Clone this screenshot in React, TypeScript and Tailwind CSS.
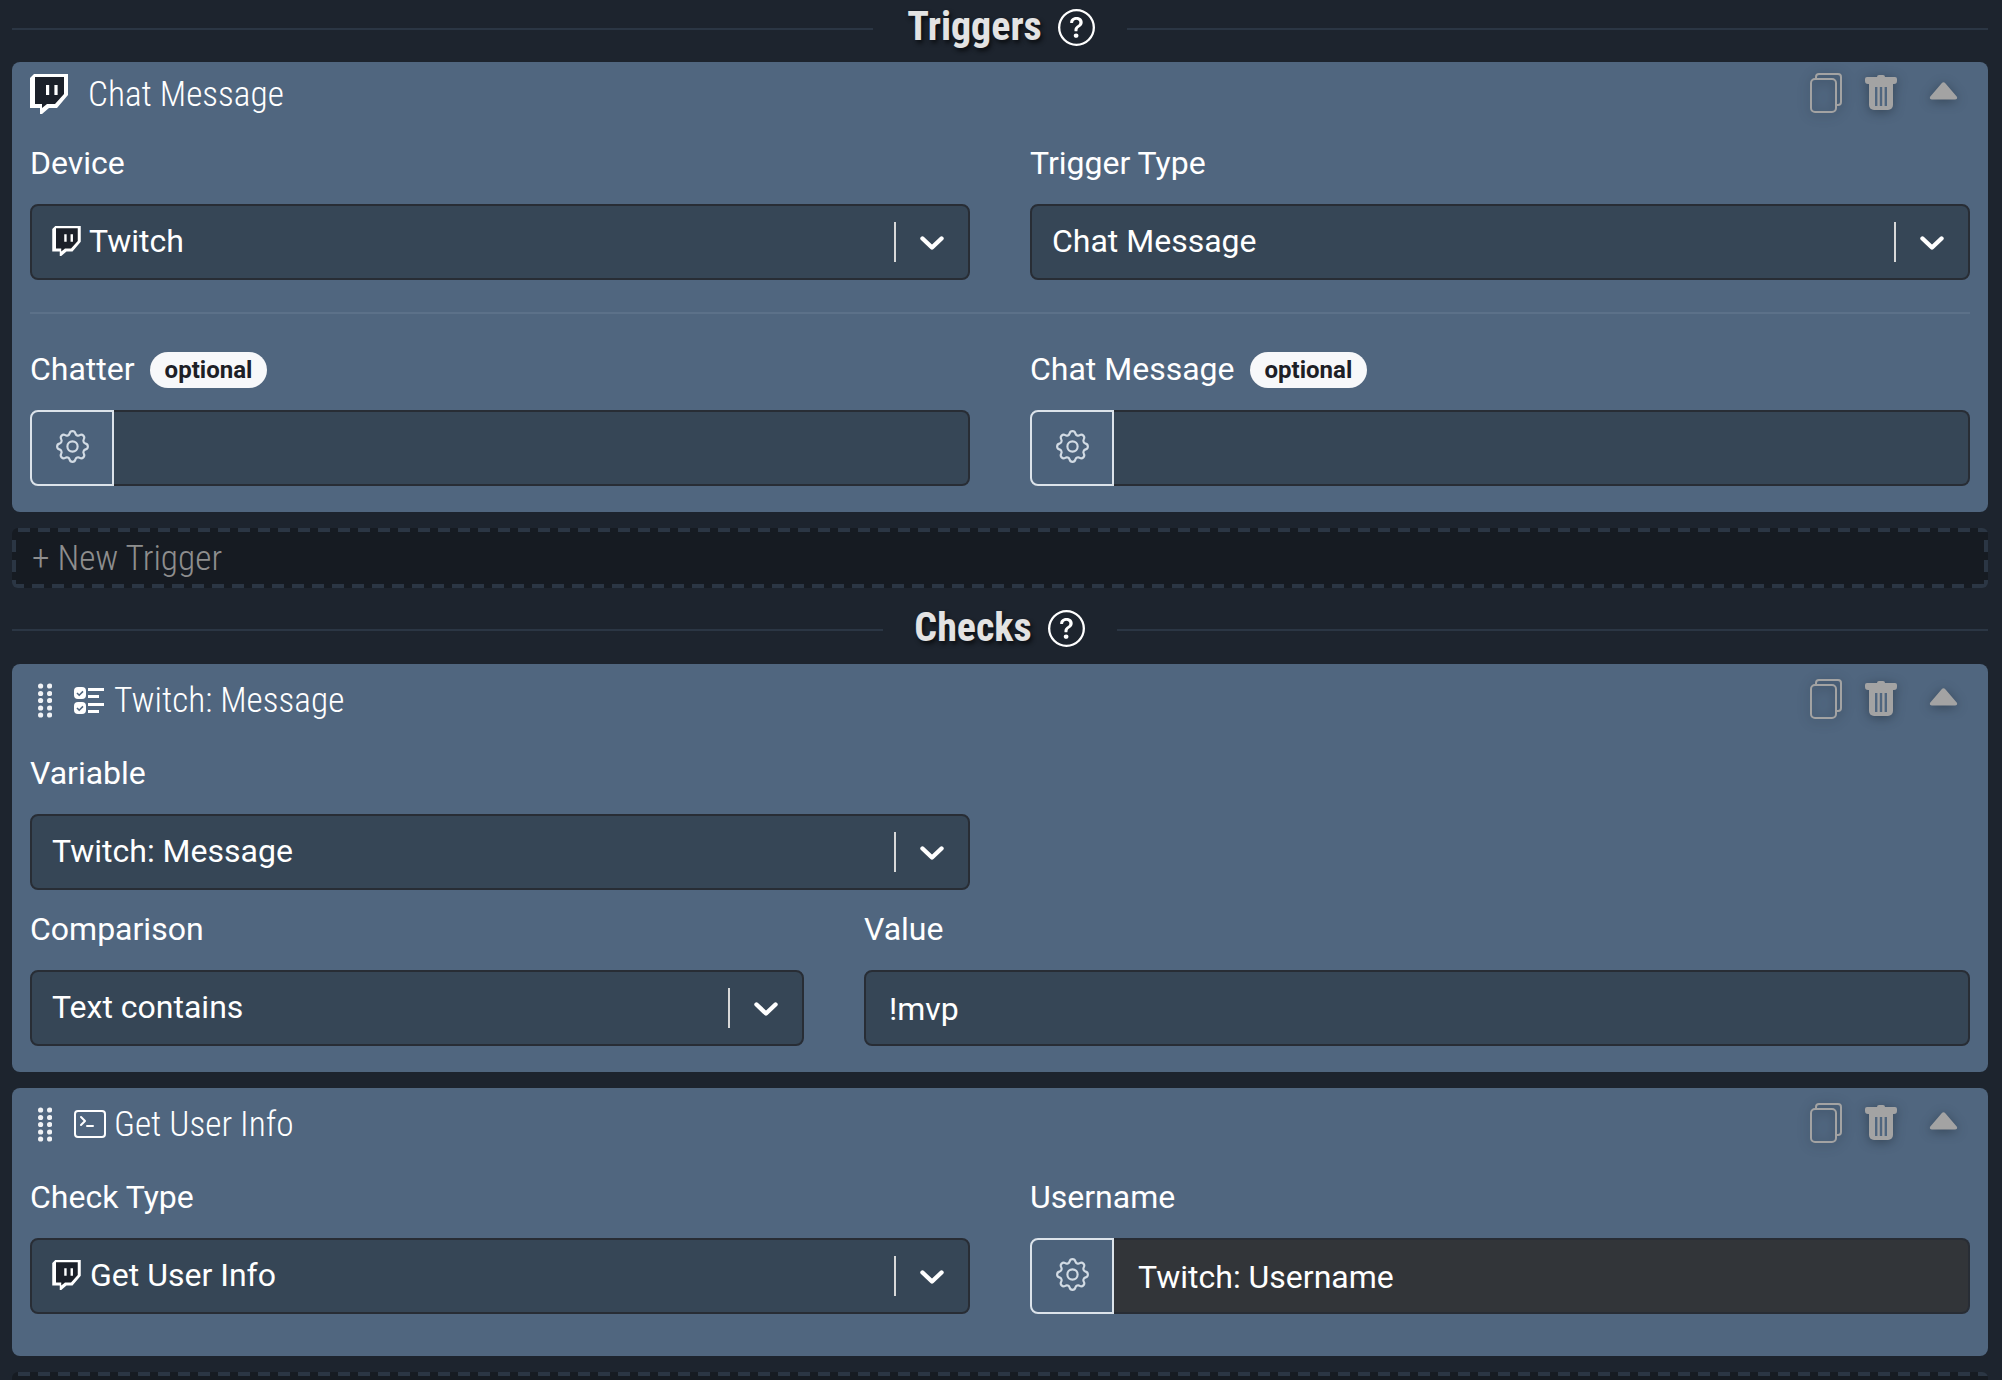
import { ReactNode } from "react";
import { BsQuestionCircle, BsTerminal } from "react-icons/bs";
import { TbSettings } from "react-icons/tb";

function TwitchIcon({ className }: { className: string }) {
  return (
    <svg viewBox="0 0 38 40" className={className}>
      <path d="M4 0H38V21L27 34H19L12 40H10V34H0V4Z" fill="#fff" />
      <path d="M5 3H34V20L25 30H17L12 34V30H5Z" fill="#1b2029" />
      <rect x="16" y="11" width="3.2" height="10" fill="#fff" />
      <rect x="24.4" y="11" width="3.2" height="10" fill="#fff" />
    </svg>
  );
}

function CopyIcon() {
  return (
    <svg viewBox="0 0 32 40" className="h-[40px] w-[32px]" fill="none" stroke="#a3a3a3" strokeWidth="2">
      <rect x="1" y="6" width="25" height="33" rx="4" />
      <path d="M6 5V4a3 3 0 0 1 3-3h19a3 3 0 0 1 3 3v25a3 3 0 0 1-3 3h-2" />
    </svg>
  );
}

function TrashIcon() {
  return (
    <svg viewBox="0 0 32 37" className="h-[37px] w-[32px]">
      <path d="M12 3a2 2 0 0 1 2-2h4a2 2 0 0 1 2 2h10a2 2 0 0 1 2 2v2a3 3 0 0 1-3 3H3a3 3 0 0 1-3-3V5a2 2 0 0 1 2-2Z" fill="#a3a3a3" />
      <path d="M4 10H28V31a5 5 0 0 1-5 5H9a5 5 0 0 1-5-5Z" fill="#a3a3a3" />
      <rect x="10" y="13" width="2.4" height="19" fill="#50667f" />
      <rect x="14.8" y="13" width="2.4" height="19" fill="#50667f" />
      <rect x="19.6" y="13" width="2.4" height="19" fill="#50667f" />
    </svg>
  );
}

function TriangleIcon() {
  return (
    <svg viewBox="0 0 28 18" className="h-[18px] w-[29px]">
      <path d="M12.4 1a2 2 0 0 1 3.2 0l11.6 13.5c1 1.3.3 3-1.5 3H2.3c-1.8 0-2.5-1.7-1.5-3Z" fill="#a3a3a3" />
    </svg>
  );
}

function DragDots() {
  return (
    <svg viewBox="0 0 14 35" className="h-[35px] w-[14px] shrink-0" fill="#f0f2f5">
      {[3, 10.5, 17.5, 25, 32].map((y) => (
        <g key={y}>
          <circle cx="2.6" cy={y} r="2.6" />
          <circle cx="11.6" cy={y} r="2.6" />
        </g>
      ))}
    </svg>
  );
}

function ChecklistIcon() {
  return (
    <svg viewBox="0 0 30 27" className="h-[27px] w-[30px]">
      <rect x="0" y="0" width="12" height="12" rx="4" fill="#fff" />
      <path d="M3 6l2.2 2.2 3.8-3.8" fill="none" stroke="#50667f" strokeWidth="1.6" />
      <rect x="14" y="1" width="16" height="3" fill="#fff" />
      <rect x="14" y="8" width="11" height="3" fill="#fff" />
      <rect x="0" y="15" width="12" height="12" rx="4" fill="#fff" />
      <path d="M3 21l2.2 2.2 3.8-3.8" fill="none" stroke="#50667f" strokeWidth="1.6" />
      <rect x="14" y="16" width="16" height="3" fill="#fff" />
      <rect x="14" y="23" width="11" height="3" fill="#fff" />
    </svg>
  );
}

function Chevron() {
  return (
    <svg viewBox="0 0 24 16" className="mt-[2px] h-[16px] w-[24px]" fill="none" stroke="#fff" strokeWidth="4.4" strokeLinecap="round" strokeLinejoin="round">
      <path d="M2.5 3.5l9.5 9 9.5-9" />
    </svg>
  );
}

function SectionTitle({ title, leftGap, rightGap }: { title: string; leftGap: string; rightGap: string }) {
  return (
    <div className="flex h-[58px] items-center">
      <div className="h-[2px] flex-1 bg-[#2b3644]" />
      <div className={`mb-[4px] flex items-center ${leftGap} ${rightGap}`}>
        <span className="text-[40px] font-bold font-stretch-condensed text-[#e3e3e3] [text-shadow:2px_3px_4px_#0b0e12]">{title}</span>
        <BsQuestionCircle className="ml-[16px] text-[37px] text-white" />
      </div>
      <div className="h-[2px] flex-1 bg-[#2b3644]" />
    </div>
  );
}

function CardHeader({ tall, icon, title }: { tall?: boolean; icon: ReactNode; title: string }) {
  return (
    <div className={`flex items-center ${tall ? "h-[72px]" : "h-[64px]"}`}>
      {icon}
      <span className="text-[35.3px] font-light font-stretch-condensed text-white">{title}</span>
      <div className="mb-[3px] ml-auto flex items-center pr-[12px] [filter:drop-shadow(0_2px_6px_rgba(20,30,40,0.45))]">
        <CopyIcon />
        <div className="mb-[1px] ml-[23px]">
          <TrashIcon />
        </div>
        <div className="mb-[3px] ml-[32px]">
          <TriangleIcon />
        </div>
      </div>
    </div>
  );
}

function Label({ children, className }: { children: ReactNode; className: string }) {
  return <div className={`flex h-[37px] items-center text-[32px] leading-[37px] text-white ${className}`}>{children}</div>;
}

function Optional() {
  return (
    <span className="ml-[15px] flex h-[36px] items-center rounded-full bg-[#f7f8fa] px-[15px] pt-[1px] text-[24px] font-bold text-[#1d2026]">optional</span>
  );
}

function Select({ children }: { children: ReactNode }) {
  return (
    <div className="flex h-[76px] items-center rounded-[8px] border-2 border-[#282d35] bg-[#364656] pl-[20px] text-[32px] text-white">
      <div className="flex flex-1 items-center pb-[2px]">{children}</div>
      <div className="h-[40px] w-[2px] bg-[#d8d8d8]" />
      <div className="flex w-[72px] justify-center">
        <Chevron />
      </div>
    </div>
  );
}

function SettingsInput({ value, dark }: { value?: string; dark?: boolean }) {
  return (
    <div className="flex h-[76px]">
      <div className="flex w-[84px] items-center justify-center rounded-l-[8px] border-2 border-[#dce3ea] bg-[#4c627b]">
        <TbSettings className="mb-[4px] text-[41px] text-[#d2dbe4]" strokeWidth={1.25} />
      </div>
      <div
        className={`flex flex-1 items-center rounded-r-[8px] border-y-2 border-r-2 border-[#282d35] pl-[24px] pt-[1px] text-[32px] text-white ${dark ? "bg-[#323539]" : "bg-[#364656]"}`}
      >
        {value}
      </div>
    </div>
  );
}

function NewRow({ label }: { label?: string }) {
  return (
    <div className="mt-[16px] flex h-[60px] items-center rounded-[6px] bg-[#161b22] bg-[repeating-linear-gradient(90deg,#2b3644_0_12px,transparent_12px_20px),repeating-linear-gradient(90deg,#2b3644_0_12px,transparent_12px_20px),repeating-linear-gradient(0deg,#2b3644_0_12px,transparent_12px_20px),repeating-linear-gradient(0deg,#2b3644_0_12px,transparent_12px_20px)] bg-no-repeat pl-[20px] text-[35.3px] font-light font-stretch-condensed text-[#8e8e8e] [background-position:6px_0,0_100%,0_4px,100%_4px] [background-size:100%_4px,100%_4px,4px_100%,4px_100%]">
      {label}
    </div>
  );
}

export default function App() {
  return (
    <div className="h-[1380px] overflow-hidden bg-[#1d242e] pl-[12px] pr-[14px] font-['Roboto',sans-serif]">
      <div className="mb-[4px]">
        <SectionTitle title="Triggers" leftGap="ml-[34px]" rightGap="mr-[32px]" />
      </div>

      <section className="rounded-[8px] bg-[#50667f] px-[18px] pb-[26px]">
        <CardHeader icon={<TwitchIcon className="mr-[20px] h-[40px] w-[38px]" />} title="Chat Message" />
        <div className="grid grid-cols-2 gap-x-[60px]">
          <div>
            <Label className="mt-[19px] mb-[22px]">Device</Label>
            <Select>
              <TwitchIcon className="mr-[8px] h-[30px] w-[29px]" />
              Twitch
            </Select>
          </div>
          <div>
            <Label className="mt-[19px] mb-[22px]">Trigger Type</Label>
            <Select>Chat Message</Select>
          </div>
        </div>
        <div className="mt-[32px] h-[2px] bg-[#5c7189]" />
        <div className="grid grid-cols-2 gap-x-[60px]">
          <div>
            <Label className="mt-[37px] mb-[22px]">
              Chatter
              <Optional />
            </Label>
            <SettingsInput />
          </div>
          <div>
            <Label className="mt-[37px] mb-[22px]">
              Chat Message
              <Optional />
            </Label>
            <SettingsInput />
          </div>
        </div>
      </section>

      <NewRow label="+ New Trigger" />

      <div className="mt-[13px] mb-[5px]">
        <SectionTitle title="Checks" leftGap="ml-[31px]" rightGap="mr-[32px]" />
      </div>

      <section className="rounded-[8px] bg-[#50667f] px-[18px] pb-[26px]">
        <CardHeader
          tall
          icon={
            <div className="flex items-center">
              <div className="ml-[8px] mr-[22px]">
                <DragDots />
              </div>
              <div className="mr-[10px]">
                <ChecklistIcon />
              </div>
            </div>
          }
          title="Twitch: Message"
        />
        <div className="grid grid-cols-2 gap-x-[60px]">
          <div>
            <Label className="mt-[19px] mb-[22px]">Variable</Label>
            <Select>Twitch: Message</Select>
          </div>
        </div>
        <div className="grid grid-cols-[774px_1fr] gap-x-[60px]">
          <div>
            <Label className="mt-[21px] mb-[22px]">Comparison</Label>
            <Select>Text contains</Select>
          </div>
          <div>
            <Label className="mt-[21px] mb-[22px]">Value</Label>
            <div className="flex h-[76px] items-center rounded-[8px] border-2 border-[#282d35] bg-[#364656] pl-[23px] pt-[1px] text-[32px] text-white">!mvp</div>
          </div>
        </div>
      </section>

      <section className="mt-[16px] rounded-[8px] bg-[#50667f] px-[18px] pb-[42px]">
        <CardHeader
          tall
          icon={
            <div className="flex items-center">
              <div className="ml-[8px] mr-[22px]">
                <DragDots />
              </div>
              <BsTerminal className="mr-[8px] text-[32px] text-white" />
            </div>
          }
          title="Get User Info"
        />
        <div className="grid grid-cols-2 gap-x-[60px]">
          <div>
            <Label className="mt-[19px] mb-[22px]">Check Type</Label>
            <Select>
              <TwitchIcon className="mr-[9px] h-[30px] w-[29px]" />
              Get User Info
            </Select>
          </div>
          <div>
            <Label className="mt-[19px] mb-[22px]">Username</Label>
            <SettingsInput value="Twitch: Username" dark />
          </div>
        </div>
      </section>

      <NewRow />
    </div>
  );
}
